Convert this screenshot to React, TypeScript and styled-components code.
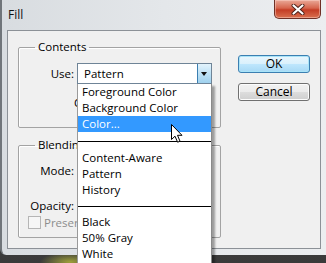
import React from "react";
import styled, { createGlobalStyle } from "styled-components";

const GlobalStyle = createGlobalStyle`
  html, body {
    margin: 0;
    padding: 0;
    background: #3e3e3e;
  }
  body {
    font-family: "Segoe UI", "Open Sans", "Noto Sans", sans-serif;
    font-size: 11.5px;
    color: #000;
  }
`;

const listItems: { label?: string; sep?: number; active?: boolean }[] = [
    { label: "Foreground Color" },
    { label: "Background Color" },
    { label: "Color...", active: true },
    { sep: 18 },
    { label: "Content-Aware" },
    { label: "Pattern" },
    { label: "History" },
    { sep: 16 },
    { label: "Black" },
    { label: "50% Gray" },
    { label: "White" },
];

export default function App() {
    return (
        <Page>
            <GlobalStyle />
            <Window>
                <TitleBar>
                    <Title>Fill</Title>
                    <CloseButton>
                        <svg width="14" height="11" viewBox="0 0 14 11">
                            <path d="M2.5 1.5 L11.5 9.5 M11.5 1.5 L2.5 9.5" stroke="#4a2018" strokeWidth="4" strokeLinecap="round" />
                            <path d="M2.5 1.5 L11.5 9.5 M11.5 1.5 L2.5 9.5" stroke="#fff" strokeWidth="2.2" strokeLinecap="round" />
                        </svg>
                    </CloseButton>
                </TitleBar>
                <Client>
                    <Groups>
                        <Group $height={89}>
                            <Legend>Contents</Legend>
                            <FieldRow $top={8}>
                                <Label>Use:</Label>
                                <Combo>
                                    <ComboText>Pattern</ComboText>
                                    <ComboArrow $focused />
                                    <DropList>
                                        {listItems.map((it, i) =>
                                            it.sep ? (
                                                <Separator key={i} $height={it.sep} />
                                            ) : (
                                                <ListItem key={i} $active={it.active}>
                                                    {it.label}
                                                </ListItem>
                                            )
                                        )}
                                        <Cursor width="13" height="20" viewBox="0 0 13 20">
                                            <path
                                                d="M0.5 0.5 L0.5 15.5 L4 12.2 L6.6 18.2 L9 17.2 L6.5 11.3 L11 11.3 Z"
                                                fill="#fff"
                                                stroke="#000"
                                                strokeWidth="1"
                                                strokeLinejoin="round"
                                            />
                                        </Cursor>
                                    </DropList>
                                </Combo>
                            </FieldRow>
                            <PatternRow>Custom Pattern:</PatternRow>
                        </Group>
                        <Group $height={101}>
                            <Legend>Blending</Legend>
                            <FieldRow $top={7}>
                                <Label>Mode:</Label>
                                <Combo>
                                    <ComboText />
                                    <ComboArrow />
                                </Combo>
                            </FieldRow>
                            <FieldRow $top={15} $short>
                                <Label>Opacity:</Label>
                                <OpacityBox />
                            </FieldRow>
                            <CheckRow>
                                <CheckBox />
                                <DisabledText>Preserve Transparency</DisabledText>
                            </CheckRow>
                        </Group>
                    </Groups>
                    <Buttons>
                        <Button $default>OK</Button>
                        <Button>Cancel</Button>
                    </Buttons>
                </Client>
            </Window>
        </Page>
    );
}

const Page = styled.div`
    position: relative;
    width: 326px;
    height: 263px;
    overflow: hidden;
    background: radial-gradient(ellipse 30px 10px at 70px 262px, #9ea03a, transparent),
        linear-gradient(#5a5a5a, #3a3a3a);
`;

const Window = styled.div`
    display: flex;
    flex-direction: column;
    width: 326px;
    height: 255px;
    box-sizing: border-box;
    border-left: 2px solid #70757a;
    border-bottom-left-radius: 6px;
    background: linear-gradient(90deg, #d8dce0, #e4e7ea 50%, #eceef0);
`;

const TitleBar = styled.div`
    display: flex;
    justify-content: space-between;
    align-items: flex-start;
    height: 30px;
    padding: 0 5px 0 6px;
`;

const Title = styled.div`
    line-height: 30px;
    font-size: 12px;
    color: #111;
`;

const CloseButton = styled.div`
    display: flex;
    align-items: center;
    justify-content: center;
    width: 45px;
    height: 18px;
    border: 1px solid #6e3026;
    border-top: none;
    border-radius: 0 0 5px 5px;
    background: linear-gradient(#eaa998, #d6654d 45%, #c43d25 55%, #d9704f);
    box-shadow: inset 0 0 0 1px rgba(255, 220, 210, 0.45);
`;

const Client = styled.div`
    display: grid;
    grid-template-columns: 203px 72px;
    column-gap: 17px;
    align-items: start;
    height: 219px;
    box-sizing: border-box;
    margin: 0 5px 0 5px;
    padding: 8px 0 0 10px;
    border: 1px solid #8c9197;
    background: #f0f0f0;
`;

const Groups = styled.div`
    display: flex;
    flex-direction: column;
    gap: 9px;
`;

const Group = styled.fieldset<{ $height: number }>`
    position: relative;
    margin: 0;
    padding: 0;
    height: ${(p) => p.$height}px;
    box-sizing: border-box;
    border: 1px solid #a3a3a3;
    border-radius: 2px;
    box-shadow: inset 1px 1px 0 #fff;
`;

const Legend = styled.legend`
    margin-left: 16px;
    padding: 0 3px;
    line-height: 16px;
`;

const FieldRow = styled.div<{ $top: number; $short?: boolean }>`
    display: grid;
    grid-template-columns: 55px 135px;
    column-gap: 3px;
    align-items: center;
    height: ${(p) => (p.$short ? 18 : 21)}px;
    margin-top: ${(p) => p.$top}px;
`;

const Label = styled.div`
    text-align: right;
`;

const Combo = styled.div`
    position: relative;
    display: flex;
    height: 21px;
    box-sizing: border-box;
    border: 1px solid #6f8497;
    background: #fff;
`;

const ComboText = styled.div`
    flex: 1;
    padding-left: 6px;
    line-height: 19px;
`;

const ComboArrow = styled.div<{ $focused?: boolean }>`
    position: relative;
    width: 13px;
    border-left: 1px solid ${(p) => (p.$focused ? "#3c7fb1" : "#a0a0a0")};
    background: ${(p) =>
        p.$focused ? "linear-gradient(#e3f3fc, #bfe2f6 50%, #9fd1ee)" : "linear-gradient(#f4f4f4, #dcdcdc)"};
    &::after {
        content: "";
        position: absolute;
        left: 3px;
        top: 8px;
        border-left: 3.5px solid transparent;
        border-right: 3.5px solid transparent;
        border-top: 4px solid #111;
    }
`;

const DropList = styled.div`
    position: absolute;
    z-index: 10;
    top: 20px;
    left: -1px;
    width: 135px;
    box-sizing: border-box;
    padding-bottom: 20px;
    border-left: 1px solid #9a9a9a;
    border-right: 1px solid #8a8a8a;
    background: #fff;
    box-shadow: 3px 2px 2px rgba(0, 0, 0, 0.35);
`;

const ListItem = styled.div<{ $active?: boolean }>`
    height: 16px;
    padding-left: 4px;
    line-height: 16px;
    white-space: nowrap;
    color: ${(p) => (p.$active ? "#fff" : "#000")};
    background: ${(p) => (p.$active ? "#3399ff" : "transparent")};
`;

const Separator = styled.div<{ $height: number }>`
    display: flex;
    align-items: center;
    height: ${(p) => p.$height}px;
    &::before {
        content: "";
        flex: 1;
        height: 1px;
        background: #000;
    }
`;

const Cursor = styled.svg`
    position: absolute;
    left: 93px;
    top: 40px;
`;

const PatternRow = styled.div`
    margin-top: 11px;
    padding-left: 55px;
    line-height: 16px;
    white-space: nowrap;
`;

const OpacityBox = styled.div`
    width: 40px;
    height: 18px;
    box-sizing: border-box;
    border: 1px solid #abadb3;
    background: #fff;
`;

const CheckRow = styled.div`
    display: flex;
    align-items: center;
    gap: 3px;
    height: 16px;
    padding-left: 9px;
`;

const CheckBox = styled.div`
    width: 13px;
    height: 13px;
    box-sizing: border-box;
    border: 1px solid #b5b5b5;
    background: #f6f6f6;
`;

const DisabledText = styled.span`
    color: #8d8d8d;
    white-space: nowrap;
`;

const Buttons = styled.div`
    display: flex;
    flex-direction: column;
    gap: 10px;
    padding-top: 16px;
`;

const Button = styled.div<{ $default?: boolean }>`
    height: 18px;
    box-sizing: border-box;
    border: 1px solid ${(p) => (p.$default ? "#3c7fb1" : "#707070")};
    border-radius: 3px;
    text-align: center;
    line-height: 16px;
    font-size: 12px;
    background: ${(p) =>
        p.$default
            ? "linear-gradient(#eaf6fd, #d9f0fc 50%, #bee6fd 51%, #a7d9f5)"
            : "linear-gradient(#f2f2f2, #ebebeb 50%, #dddddd 51%, #cfcfcf)"};
    box-shadow: inset 0 0 0 1px ${(p) => (p.$default ? "#a9e4f8" : "#fcfcfc")};
`;
